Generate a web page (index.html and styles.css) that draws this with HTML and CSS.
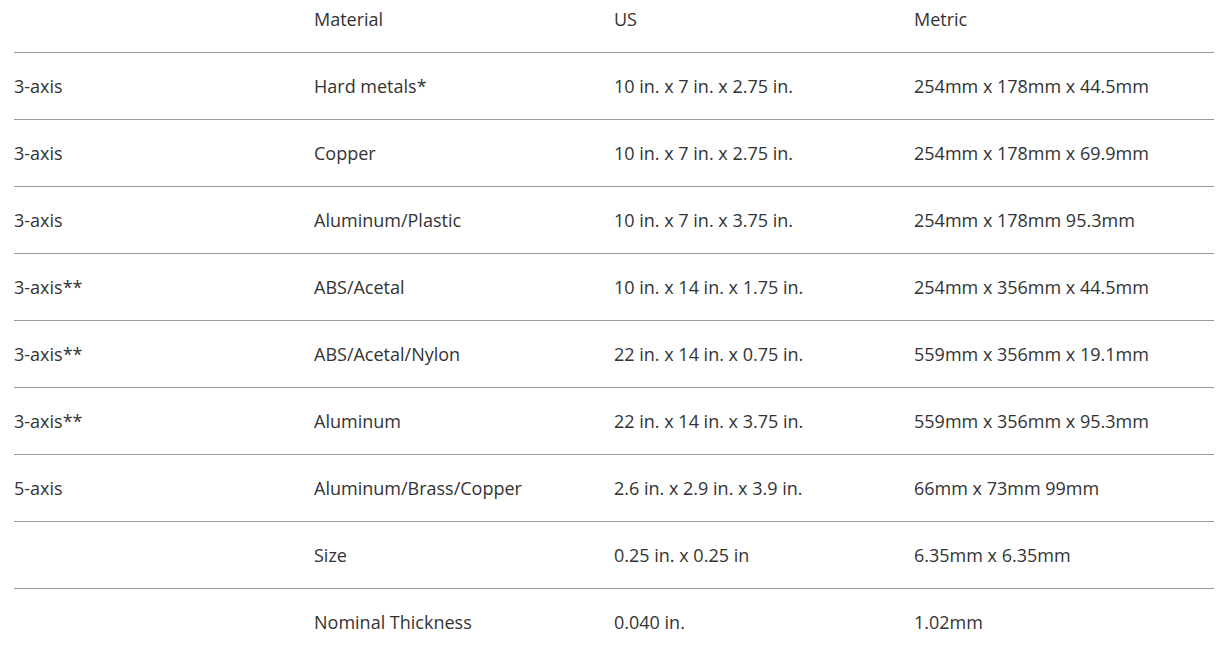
FILE: index.html
```html
<!DOCTYPE html>
<html>
<head>
<meta charset="utf-8">
<link rel="stylesheet" href="styles.css">
</head>
<body>
<div class="wrap">
<table class="spec">
<thead>
<tr><th></th><th>Material</th><th>US</th><th>Metric</th></tr>
</thead>
<tbody>
<tr><td>3-axis</td><td>Hard metals*</td><td>10 in. x 7 in. x 2.75 in.</td><td>254mm x 178mm x 44.5mm</td></tr>
<tr><td>3-axis</td><td>Copper</td><td>10 in. x 7 in. x 2.75 in.</td><td>254mm x 178mm x 69.9mm</td></tr>
<tr><td>3-axis</td><td>Aluminum/Plastic</td><td>10 in. x 7 in. x 3.75 in.</td><td>254mm x 178mm 95.3mm</td></tr>
<tr><td>3-axis**</td><td>ABS/Acetal</td><td>10 in. x 14 in. x 1.75 in.</td><td>254mm x 356mm x 44.5mm</td></tr>
<tr><td>3-axis**</td><td>ABS/Acetal/Nylon</td><td>22 in. x 14 in. x 0.75 in.</td><td>559mm x 356mm x 19.1mm</td></tr>
<tr><td>3-axis**</td><td>Aluminum</td><td>22 in. x 14 in. x 3.75 in.</td><td>559mm x 356mm x 95.3mm</td></tr>
<tr><td>5-axis</td><td>Aluminum/Brass/Copper</td><td>2.6 in. x 2.9 in. x 3.9 in.</td><td>66mm x 73mm 99mm</td></tr>
<tr><td></td><td>Size</td><td>0.25 in. x 0.25 in</td><td>6.35mm x 6.35mm</td></tr>
<tr><td></td><td>Nominal Thickness</td><td>0.040 in.</td><td>1.02mm</td></tr>
</tbody>
</table>
</div>
</body>
</html>
```
FILE: styles.css
```css
html, body {
  margin: 0;
  padding: 0;
  background: #fff;
}
body {
  font-family: "Open Sans", "Liberation Sans", sans-serif;
  font-size: 18px;
  color: #333;
  overflow: hidden;
}
.wrap {
  padding-left: 14px;
}
.spec {
  width: 1200px;
  border-collapse: collapse;
  table-layout: fixed;
}
.spec th, .spec td {
  width: 300px;
  text-align: left;
  font-weight: 400;
  line-height: 24px;
  padding: 0;
  vertical-align: top;
  white-space: nowrap;
}
.spec th {
  padding-top: 7px;
  padding-bottom: 21px;
  border-bottom: 1px solid #9a9a9a;
}
.spec td {
  padding-top: 21px;
  padding-bottom: 21px;
  border-bottom: 1px solid #9a9a9a;
}
```
